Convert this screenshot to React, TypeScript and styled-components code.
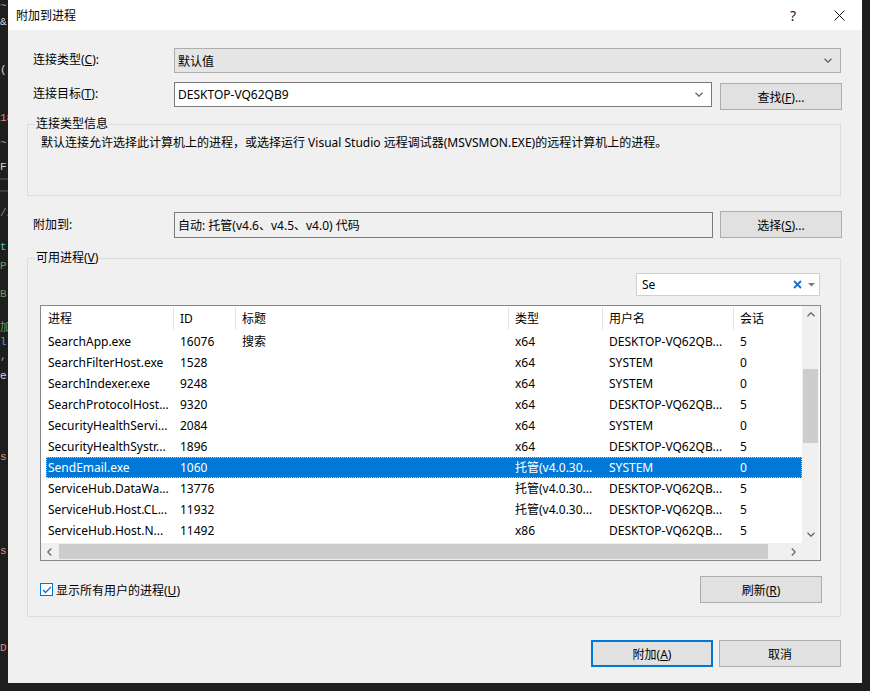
import React from 'react';
import styled, { createGlobalStyle, css } from 'styled-components';

const UI_FONT = `"Noto Sans", "Noto Sans CJK SC", sans-serif`;

const GlobalStyle = createGlobalStyle`
  html, body {
    margin: 0;
    padding: 0;
    background: #1e1e1e;
    overflow: hidden;
  }
  body {
    font-family: ${UI_FONT};
    font-size: 12px;
    color: #000;
  }
`;

const Screen = styled.div`
  display: flex;
  width: 870px;
  height: 691px;
  background: #1e1e1e;
`;

const CodeStrip = styled.div`
  width: 8px;
  overflow: hidden;
  display: flex;
  flex-direction: column;
  font-family: "Liberation Mono", "Noto Sans CJK SC", monospace;
  font-size: 11px;
  line-height: 12px;
`;

const CodeLine = styled.div<{ $top: number; $color: string }>`
  margin-top: ${p => p.$top}px;
  height: 12px;
  color: ${p => p.$color};
  white-space: nowrap;
`;

const CodeRule = styled.div<{ $top: number }>`
  margin-top: ${p => p.$top}px;
  height: 2px;
  background: #3c3c3c;
`;

const Window = styled.div`
  width: 854px;
  height: 683px;
  display: flex;
  flex-direction: column;
  background: #f0f0f0;
`;

const TitleBar = styled.div`
  height: 30px;
  flex-shrink: 0;
  background: #fff;
  display: flex;
  align-items: center;
  padding-left: 8px;
`;

const Title = styled.div`
  flex: 1;
`;

const CaptionButton = styled.div`
  width: 46px;
  height: 30px;
  display: flex;
  align-items: center;
  justify-content: center;
  font-size: 14px;
  color: #222;
`;

const Content = styled.div`
  flex: 1;
  display: flex;
  flex-direction: column;
  padding: 0 21px 0 19px;
`;

const FieldRow = styled.div<{ $mt: number; $center?: boolean }>`
  display: flex;
  align-items: ${p => (p.$center ? 'center' : 'flex-start')};
  margin-top: ${p => p.$mt}px;
`;

const FieldLabel = styled.div`
  width: 147px;
  flex-shrink: 0;
  box-sizing: border-box;
  padding-left: 6px;
  line-height: 24px;
`;

const fieldBase = css`
  flex: 1;
  box-sizing: border-box;
  display: flex;
  align-items: center;
  padding: 0 8px 0 3px;
`;

const ComboBox = styled.div`
  ${fieldBase};
  height: 25px;
  border: 1px solid #adadad;
  background: #e5e5e5;
`;

const EditCombo = styled.div`
  ${fieldBase};
  height: 25px;
  margin-right: 8px;
  border: 1px solid #7a7a7a;
  background: #fff;
`;

const ReadOnlyBox = styled.div`
  ${fieldBase};
  height: 26px;
  margin-right: 7px;
  border: 1px solid #7a7a7a;
  background: #f0f0f0;
`;

const FieldText = styled.span`
  flex: 1;
`;

const Button = styled.button<{ $primary?: boolean; $mt?: number }>`
  width: 122px;
  height: 27px;
  flex-shrink: 0;
  box-sizing: border-box;
  margin: ${p => p.$mt ?? 0}px -1px 0 0;
  padding: 0;
  border: 1px solid #adadad;
  background: #e1e1e1;
  font-family: ${UI_FONT};
  font-size: 12px;
  color: #000;
  ${p =>
    p.$primary &&
    css`
      border: 2px solid #0078d7;
      margin-right: 0;
    `}
`;

const GroupBox = styled.div<{ $mt: number; $h: number }>`
  position: relative;
  margin-top: ${p => p.$mt}px;
  height: ${p => p.$h}px;
  box-sizing: border-box;
  border: 1px solid #dcdcdc;
  display: flex;
  flex-direction: column;
`;

const GroupTitle = styled.span`
  position: absolute;
  top: -9px;
  left: 7px;
  padding: 0 1px;
  background: #f0f0f0;
  line-height: 16px;
`;

const InfoText = styled.div`
  padding: 10px 0 0 13px;
  line-height: 16px;
`;

const GroupBody = styled.div`
  flex: 1;
  display: flex;
  flex-direction: column;
  padding: 14px 19px 0 12px;
`;

const FilterRow = styled.div`
  display: flex;
  justify-content: flex-end;
`;

const FilterBox = styled.div`
  width: 184px;
  height: 23px;
  box-sizing: border-box;
  margin-right: 1px;
  border: 1px solid #cfcfd6;
  background: #fff;
  display: flex;
  align-items: center;
  padding: 0 4px 0 5px;
  gap: 6px;
`;

const ProcList = styled.div`
  margin-top: 9px;
  height: 256px;
  box-sizing: border-box;
  border: 1px solid #828790;
  background: #fff;
  padding-right: 1px;
  display: grid;
  grid-template-columns: 1fr 17px;
  grid-template-rows: 1fr 17px;
`;

const ListMain = styled.div`
  overflow: hidden;
  padding-left: 5px;
`;

const COLS = '128px 62px 273px 94px 131px 1fr';

const HeaderRow = styled.div`
  display: grid;
  grid-template-columns: ${COLS};
  height: 25px;
`;

const HeaderCell = styled.div<{ $first?: boolean; $last?: boolean }>`
  margin: 1px 0;
  line-height: 23px;
  padding-left: ${p => (p.$first ? 2 : 6)}px;
  border-right: ${p => (p.$last ? 'none' : '1px solid #e5e5e5')};
  white-space: nowrap;
  overflow: hidden;
`;

const DataRow = styled.div<{ $selected?: boolean }>`
  display: grid;
  grid-template-columns: ${COLS};
  height: 21px;
  line-height: 21px;
  ${p =>
    p.$selected &&
    css`
      background: #0078d7;
      color: #fff;
      outline: 1px dotted #9fcdf2;
      outline-offset: -1px;
    `}
`;

const Cell = styled.div<{ $first?: boolean }>`
  padding-left: ${p => (p.$first ? 2 : 6)}px;
  white-space: nowrap;
  overflow: hidden;
`;

const VScroll = styled.div`
  background: #f0f0f0;
  display: flex;
  flex-direction: column;
`;

const HScroll = styled.div`
  background: #f0f0f0;
  display: flex;
`;

const ArrowBox = styled.div`
  width: 17px;
  height: 17px;
  flex-shrink: 0;
  display: flex;
  align-items: center;
  justify-content: center;
`;

const VTrack = styled.div`
  flex: 1;
  padding: 46px 1px 0;
`;

const VThumb = styled.div`
  height: 74px;
  background: #cdcdcd;
`;

const HTrack = styled.div`
  flex: 1;
  padding: 1px 0 1px 1px;
`;

const HThumb = styled.div`
  width: 709px;
  height: 15px;
  background: #cdcdcd;
`;

const Corner = styled.div`
  background: #f0f0f0;
`;

const OptionsRow = styled.div`
  margin-top: 15px;
  display: flex;
  align-items: center;
  justify-content: space-between;
`;

const CheckLabel = styled.label`
  display: flex;
  align-items: center;
  gap: 3px;
`;

const CheckBox = styled.span`
  width: 13px;
  height: 13px;
  box-sizing: border-box;
  border: 1px solid #0078d7;
  background: #fff;
  display: flex;
  align-items: center;
  justify-content: center;
`;

const ButtonBar = styled.div`
  margin-top: 23px;
  margin-right: 1px;
  display: flex;
  justify-content: flex-end;
  gap: 6px;
`;

const Mn = styled.u`
  text-underline-offset: 1px;
`;

const Chevron = ({ dir = 'down', color = '#606060' }: { dir?: 'down' | 'up' | 'left' | 'right'; color?: string }) => {
  const pts = {
    down: '0.5,0.5 4,4 7.5,0.5',
    up: '0.5,4 4,0.5 7.5,4',
    left: '4,0.5 0.5,4 4,7.5',
    right: '0.5,0.5 4,4 0.5,7.5',
  }[dir];
  const vertical = dir === 'down' || dir === 'up';
  return (
    <svg width={vertical ? 8 : 5} height={vertical ? 5 : 8} viewBox={vertical ? '0 0 8 4.5' : '0 0 4.5 8'}>
      <polyline points={pts} fill="none" stroke={color} strokeWidth="1.2" />
    </svg>
  );
};

// editor text peeking out behind the dialog; margins are gaps between lines
const codeLines: { top: number; text: string; color: string; rule?: boolean }[] = [
  { top: 0, text: '~', color: '#ce9178' },
  { top: 4, text: '&', color: '#d4d4d4' },
  { top: 36, text: '(', color: '#d4d4d4' },
  { top: 36, text: '18', color: '#ce9178' },
  { top: 13, text: '~', color: '#ce9178' },
  { top: 12, text: 'F', color: '#d4d4d4' },
  { top: 5, text: '', color: '', rule: true },
  { top: 10, text: '', color: '', rule: true },
  { top: 15, text: '//', color: '#6a9955' },
  { top: 22, text: 't', color: '#4ec9b0' },
  { top: 7, text: 'P', color: '#6a9955' },
  { top: 16, text: 'B', color: '#6a9955' },
  { top: 22, text: '加', color: '#6a9955' },
  { top: 2, text: 'l', color: '#569cd6' },
  { top: 2, text: ',', color: '#ce9178' },
  { top: 8, text: 'e', color: '#d4d4d4' },
  { top: 69, text: 's', color: '#ce9178' },
  { top: 82, text: 's', color: '#ce9178' },
  { top: 85, text: 'D', color: '#ce9178' },
];

type Proc = { name: string; id: string; title: string; type: string; user: string; session: string };

const processes: Proc[] = [
  { name: 'SearchApp.exe', id: '16076', title: '搜索', type: 'x64', user: 'DESKTOP-VQ62QB...', session: '5' },
  { name: 'SearchFilterHost.exe', id: '1528', title: '', type: 'x64', user: 'SYSTEM', session: '0' },
  { name: 'SearchIndexer.exe', id: '9248', title: '', type: 'x64', user: 'SYSTEM', session: '0' },
  { name: 'SearchProtocolHost...', id: '9320', title: '', type: 'x64', user: 'DESKTOP-VQ62QB...', session: '5' },
  { name: 'SecurityHealthServi...', id: '2084', title: '', type: 'x64', user: 'SYSTEM', session: '0' },
  { name: 'SecurityHealthSystr...', id: '1896', title: '', type: 'x64', user: 'DESKTOP-VQ62QB...', session: '5' },
  { name: 'SendEmail.exe', id: '1060', title: '', type: '托管(v4.0.30...', user: 'SYSTEM', session: '0' },
  { name: 'ServiceHub.DataWa...', id: '13776', title: '', type: '托管(v4.0.30...', user: 'DESKTOP-VQ62QB...', session: '5' },
  { name: 'ServiceHub.Host.CL...', id: '11932', title: '', type: '托管(v4.0.30...', user: 'DESKTOP-VQ62QB...', session: '5' },
  { name: 'ServiceHub.Host.N...', id: '11492', title: '', type: 'x86', user: 'DESKTOP-VQ62QB...', session: '5' },
];

const headers = ['进程', 'ID', '标题', '类型', '用户名', '会话'];

const App: React.FC = () => {
  return (
    <Screen>
      <GlobalStyle />
      <CodeStrip>
        {codeLines.map((l, i) =>
          l.rule ? (
            <CodeRule key={i} $top={l.top} />
          ) : (
            <CodeLine key={i} $top={l.top} $color={l.color}>
              {l.text}
            </CodeLine>
          )
        )}
      </CodeStrip>

      <Window>
        <TitleBar>
          <Title>附加到进程</Title>
          <CaptionButton>?</CaptionButton>
          <CaptionButton>
            <svg width="11" height="11" viewBox="0 0 11 11">
              <path d="M0.5 0.5 L10.5 10.5 M10.5 0.5 L0.5 10.5" stroke="#111" strokeWidth="1" />
            </svg>
          </CaptionButton>
        </TitleBar>

        <Content>
          <FieldRow $mt={18}>
            <FieldLabel>
              连接类型(<Mn>C</Mn>):
            </FieldLabel>
            <ComboBox>
              <FieldText>默认值</FieldText>
              <Chevron />
            </ComboBox>
          </FieldRow>

          <FieldRow $mt={9}>
            <FieldLabel>
              连接目标(<Mn>T</Mn>):
            </FieldLabel>
            <EditCombo>
              <FieldText>DESKTOP-VQ62QB9</FieldText>
              <Chevron />
            </EditCombo>
            <Button $mt={1}>
              查找(<Mn>F</Mn>)...
            </Button>
          </FieldRow>

          <GroupBox $mt={14} $h={72}>
            <GroupTitle>连接类型信息</GroupTitle>
            <InfoText>
              默认连接允许选择此计算机上的进程，或选择运行 Visual Studio 远程调试器(MSVSMON.EXE)的远程计算机上的进程。
            </InfoText>
          </GroupBox>

          <FieldRow $mt={15} $center>
            <FieldLabel>附加到:</FieldLabel>
            <ReadOnlyBox>
              <FieldText>自动: 托管(v4.6、v4.5、v4.0) 代码</FieldText>
            </ReadOnlyBox>
            <Button>
              选择(<Mn>S</Mn>)...
            </Button>
          </FieldRow>

          <GroupBox $mt={20} $h={359}>
            <GroupTitle>
              可用进程(<Mn>V</Mn>)
            </GroupTitle>
            <GroupBody>
              <FilterRow>
                <FilterBox>
                  <FieldText>Se</FieldText>
                  <svg width="9" height="9" viewBox="0 0 9 9">
                    <path d="M1 1 L8 8 M8 1 L1 8" stroke="#1a6fd1" strokeWidth="1.8" />
                  </svg>
                  <svg width="7" height="4" viewBox="0 0 7 4">
                    <polygon points="0,0 7,0 3.5,3.5" fill="#7a7a7a" />
                  </svg>
                </FilterBox>
              </FilterRow>

              <ProcList>
                <ListMain>
                  <HeaderRow>
                    {headers.map((h, i) => (
                      <HeaderCell key={h} $first={i === 0} $last={i === headers.length - 1}>
                        {h}
                      </HeaderCell>
                    ))}
                  </HeaderRow>
                  {processes.map(p => (
                    <DataRow key={p.name} $selected={p.name === 'SendEmail.exe'}>
                      <Cell $first>{p.name}</Cell>
                      <Cell>{p.id}</Cell>
                      <Cell>{p.title}</Cell>
                      <Cell>{p.type}</Cell>
                      <Cell>{p.user}</Cell>
                      <Cell>{p.session}</Cell>
                    </DataRow>
                  ))}
                </ListMain>
                <VScroll>
                  <ArrowBox>
                    <Chevron dir="up" />
                  </ArrowBox>
                  <VTrack>
                    <VThumb />
                  </VTrack>
                  <ArrowBox>
                    <Chevron dir="down" />
                  </ArrowBox>
                </VScroll>
                <HScroll>
                  <ArrowBox>
                    <Chevron dir="left" />
                  </ArrowBox>
                  <HTrack>
                    <HThumb />
                  </HTrack>
                  <ArrowBox>
                    <Chevron dir="right" />
                  </ArrowBox>
                </HScroll>
                <Corner />
              </ProcList>

              <OptionsRow>
                <CheckLabel>
                  <CheckBox>
                    <svg width="10" height="8" viewBox="0 0 10 8">
                      <polyline points="1,4 3.5,6.5 9,1" fill="none" stroke="#1a6fd1" strokeWidth="1.3" />
                    </svg>
                  </CheckBox>
                  <span>
                    显示所有用户的进程(<Mn>U</Mn>)
                  </span>
                </CheckLabel>
                <Button>
                  刷新(<Mn>R</Mn>)
                </Button>
              </OptionsRow>
            </GroupBody>
          </GroupBox>

          <ButtonBar>
            <Button $primary>
              附加(<Mn>A</Mn>)
            </Button>
            <Button>取消</Button>
          </ButtonBar>
        </Content>
      </Window>
    </Screen>
  );
};

export default App;
